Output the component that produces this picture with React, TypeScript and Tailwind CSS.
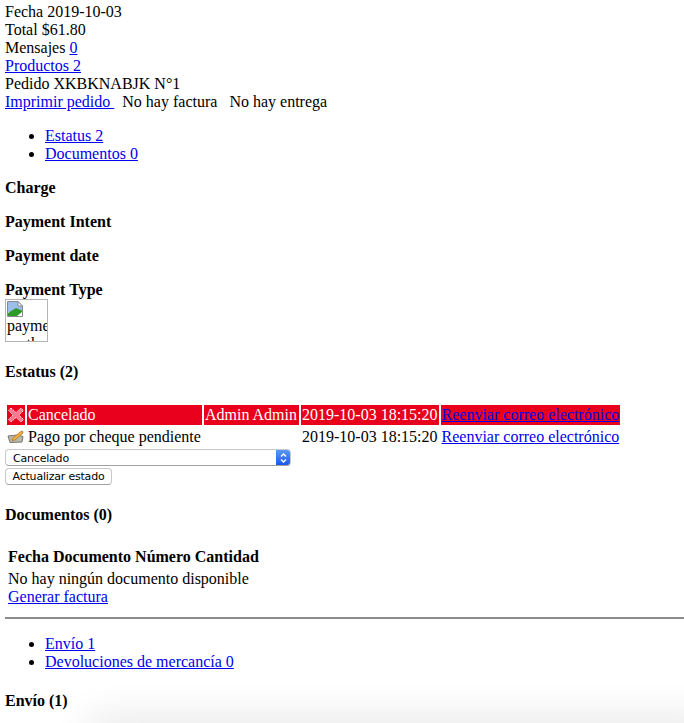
const link = 'text-[#0000ee] underline';

function CancelIcon() {
  return (
    <svg width="18" height="18" viewBox="0 0 18 18" className="block">
      <path d="M4 2 L9 6.5 L14 2 L16.5 4.5 L12 9 L16.5 13.5 L14 16 L9 11.5 L4 16 L1.5 13.5 L6 9 L1.5 4.5 Z" fill="#f47c8e" stroke="#fde3e6" strokeWidth="1" strokeDasharray="1.5 1" />
    </svg>
  );
}

function PencilIcon() {
  return (
    <svg width="17" height="14" viewBox="0 0 17 14" className="block">
      <path d="M1 6 L11 5 L16 6.5 L15 12 L3 12.5 Z" fill="#b9b9ad" stroke="#77776c" strokeWidth="1" />
      <path d="M5 9 L13 2 L15.5 1 L16 3 L8 10 L5 10.5 Z" fill="#f0b23c" stroke="#b5762a" strokeWidth="0.8" />
    </svg>
  );
}

function BrokenImage() {
  return (
    <svg width="16" height="16" viewBox="0 0 16 16" className="block">
      <path d="M0.5 0.5 H11 L15.5 5 V15.5 H0.5 Z" fill="#ffffff" stroke="#8a8a8a" strokeWidth="1" />
      <rect x="1" y="1" width="10" height="10" fill="#9dbdea" />
      <rect x="11" y="5" width="4" height="4" fill="#9dbdea" />
      <path d="M1 15 V12 L9 7 L15 9.5 V11 L10 15 Z" fill="#2f9a2c" />
      <path d="M11 0.5 V5 H15.5 Z" fill="#ffffff" stroke="#8a8a8a" strokeWidth="1" />
    </svg>
  );
}

function Heading({ children }: { children: React.ReactNode }) {
  return <h4 className="mb-4 text-base font-bold leading-[18px]">{children}</h4>;
}

function Tabs({ items }: { items: string[] }) {
  return (
    <ul className="my-4 list-disc pl-10">
      {items.map((item) => (
        <li key={item} className="leading-[18px]">
          <a href="#" className={link}>{item}</a>
        </li>
      ))}
    </ul>
  );
}

export default function App() {
  return (
    <div className="relative h-[723px] overflow-hidden bg-white px-[5px] pt-[3px] font-['Liberation_Serif',serif] text-base leading-[18px] text-black">
      <div>Fecha 2019-10-03</div>
      <div>Total $61.80</div>
      <div>Mensajes <a href="#" className={link}>0</a></div>
      <div><a href="#" className={link}>Productos 2</a></div>
      <div>Pedido XKBKNABJK N°1</div>
      <div className="whitespace-pre">
        <a href="#" className={link}>Imprimir pedido </a>  No hay factura   No hay entrega
      </div>

      <Tabs items={['Estatus 2', 'Documentos 0']} />

      <Heading>Charge</Heading>
      <Heading>Payment Intent</Heading>
      <Heading>Payment date</Heading>
      <h4 className="text-base font-bold leading-[18px]">Payment Type</h4>
      <div className="h-[43px] w-[43px] overflow-hidden border border-[#b4b4b4] pl-px pt-px">
        <BrokenImage />
        <div className="leading-[18px]">payment</div>
        <div className="leading-[18px]">method</div>
      </div>

      <h4 className="mt-[21px] text-base font-bold leading-[18px]">Estatus (2)</h4>

      <table className="mt-[22px] border-separate border-spacing-[2px]">
        <tbody>
          <tr className="bg-[#e8001c] text-white">
            <td className="w-[18px] p-0"><CancelIcon /></td>
            <td className="w-[175px] p-px">Cancelado</td>
            <td className="w-[95px] p-px">Admin Admin</td>
            <td className="p-px">2019-10-03 18:15:20</td>
            <td className="p-px"><a href="#" className={link}>Reenviar correo electrónico</a></td>
          </tr>
          <tr>
            <td className="p-0"><PencilIcon /></td>
            <td className="whitespace-nowrap p-px">Pago por cheque pendiente</td>
            <td className="p-px"></td>
            <td className="p-px">2019-10-03 18:15:20</td>
            <td className="p-px"><a href="#" className={link}>Reenviar correo electrónico</a></td>
          </tr>
        </tbody>
      </table>

      <div className="font-['DejaVu_Sans',sans-serif] text-[11px] tracking-[-0.2px]">
        <div className="flex h-[17px] w-[286px] items-center overflow-hidden rounded-[4px] border border-[#c8c8c8] border-b-[#a0a0a0] bg-white pl-[7px] leading-none">
          <span className="flex-1 pt-px">Cancelado</span>
          <span className="-mr-px flex h-[17px] w-[15px] items-center justify-center bg-gradient-to-b from-[#5d9cf8] to-[#1a50f0]">
            <svg width="9" height="12" viewBox="0 0 9 12" fill="none" stroke="#ffffff" strokeWidth="1.4">
              <path d="M2 4.5 L4.5 2 L7 4.5" />
              <path d="M2 7.5 L4.5 10 L7 7.5" />
            </svg>
          </span>
        </div>
        <button className="mt-[2px] block h-[17px] w-[107px] rounded-[4px] border border-[#c8c8c8] border-b-[#a0a0a0] bg-white text-center leading-none text-black">
          Actualizar estado
        </button>
      </div>

      <h4 className="mt-[21px] text-base font-bold leading-[18px]">Documentos (0)</h4>

      <table className="mt-[21px] border-separate border-spacing-[2px]">
        <tbody>
          <tr><th className="p-px text-left font-bold">Fecha Documento Número Cantidad</th></tr>
          <tr>
            <td className="p-px">
              <div>No hay ningún documento disponible</div>
              <a href="#" className={link}>Generar factura</a>
            </td>
          </tr>
        </tbody>
      </table>

      <hr className="mr-[-5px] mb-4 mt-2 border-t-2 border-b-0 border-[#8c8c8c]" />

      <Tabs items={['Envío 1', 'Devoluciones de mercancía 0']} />

      <div className="pointer-events-none absolute -bottom-[20px] left-[90px] -right-[40px] h-[20px] shadow-[0_0_40px_rgba(0,0,0,0.16)]" />

      <h4 className="relative mt-[21px] text-base font-bold leading-[18px]">Envío (1)</h4>
    </div>
  );
}
